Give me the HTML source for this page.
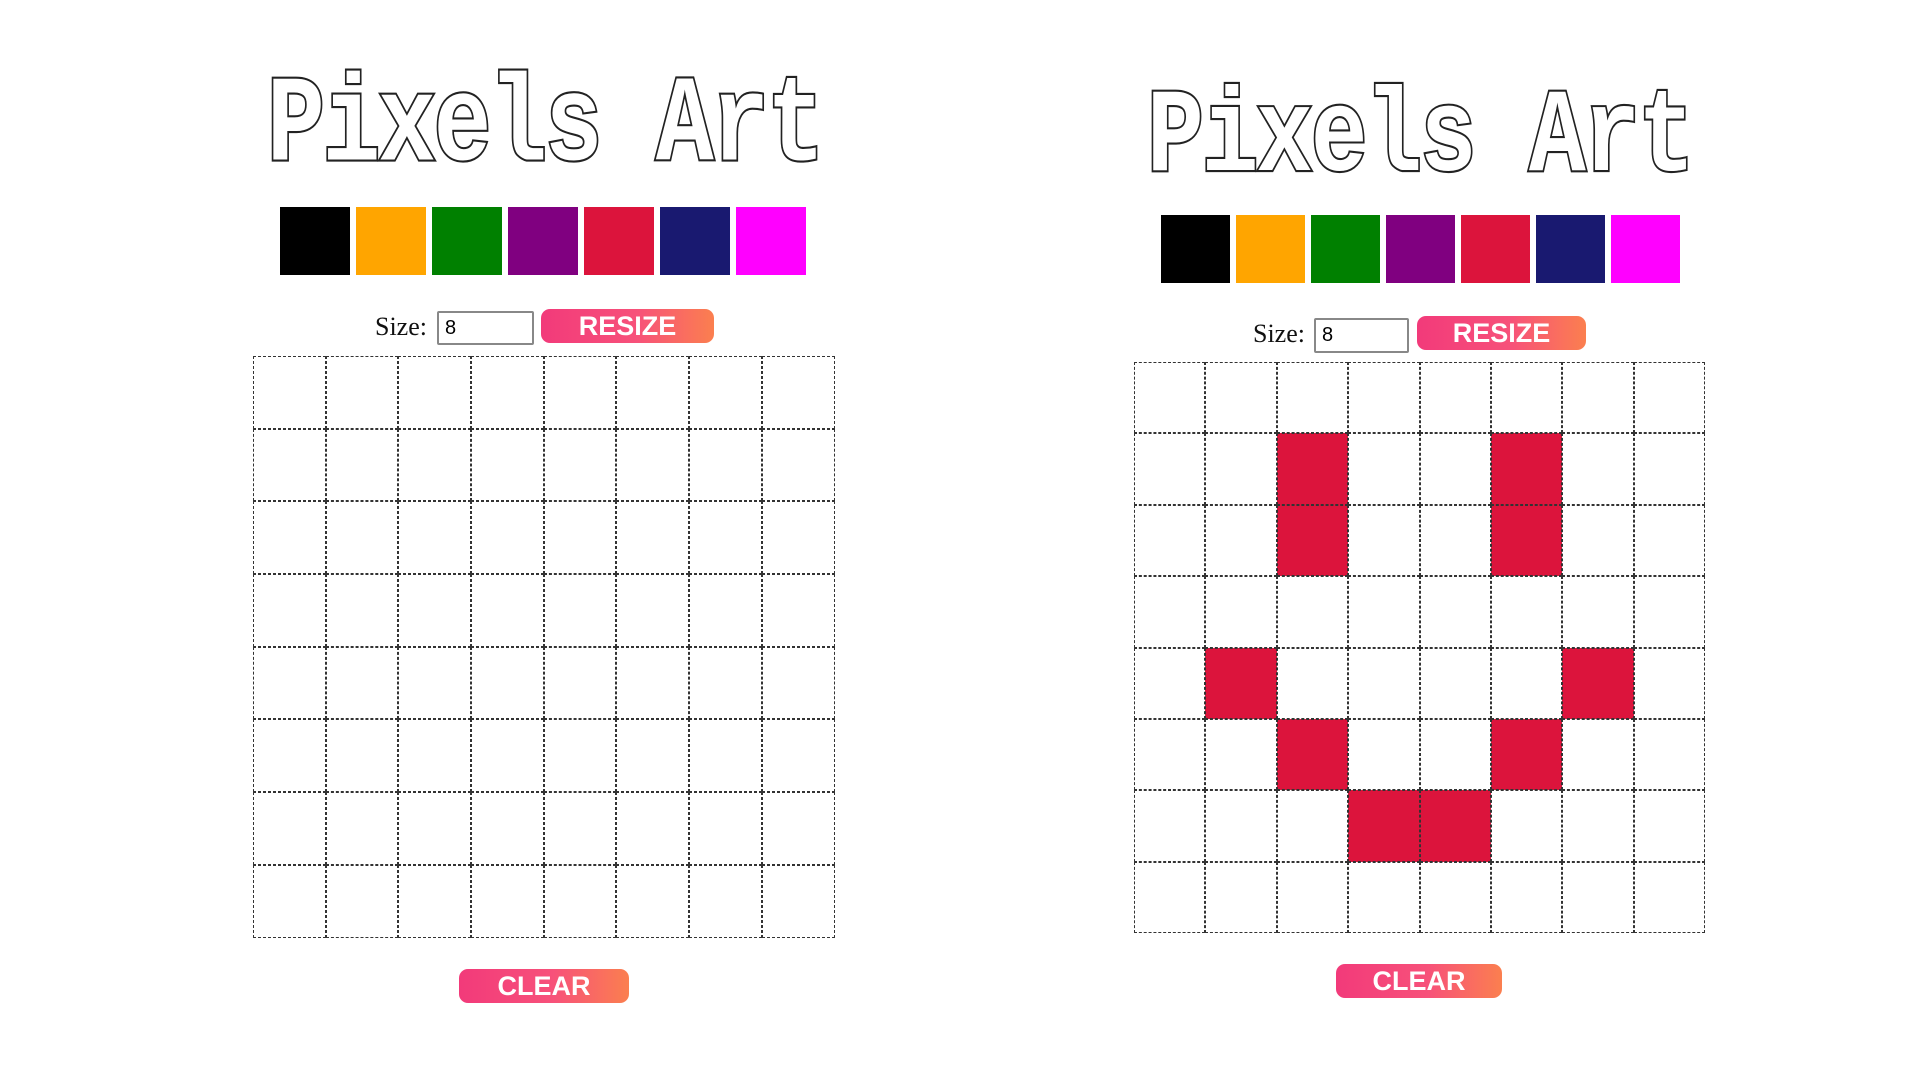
<!DOCTYPE html>
<html><head><meta charset="utf-8"><style>
body{margin:0;width:1920px;height:1080px;background:#fff;position:relative;overflow:hidden;font-family:"Liberation Serif",serif}
.t{position:absolute;font-family:"Liberation Mono",monospace;font-weight:bold;color:#fff;-webkit-text-stroke:3px #222;paint-order:stroke fill;white-space:nowrap;line-height:1;transform-origin:left top;letter-spacing:-2px}
.pal{position:absolute;display:flex;gap:6px}
.pal div{height:68px}
.lbl{position:absolute;font-size:26px;color:#111}
.inp{position:absolute;border:2px solid #888;border-radius:2px;box-sizing:border-box;font-family:"Liberation Sans",sans-serif;font-size:20px;padding:4px 6px;background:#fff}
.btn{position:absolute;border-radius:9px;background:linear-gradient(90deg,#f23a7a,#f7517a 55%,#fb7f4f);color:#fff;font-family:"Liberation Sans",sans-serif;font-weight:bold;font-size:27px;text-align:center;box-sizing:border-box}
.grid{position:absolute;display:grid}
.grid div{border:1.5px dashed #333;box-sizing:border-box}
.grid div.r{background:#dc143c}
</style></head><body>

<div class="t" style="left:267px;top:66px;font-size:86px;transform:scale(1.12,1.42)">Pixels Art</div>
<div class="t" style="left:1147px;top:79px;font-size:86px;transform:scale(1.1,1.38)">Pixels Art</div>

<div class="pal" style="left:280px;top:207px"><div style="width:70px;background:#000"></div><div style="width:70px;background:#ffa500"></div><div style="width:70px;background:#008000"></div><div style="width:70px;background:#800080"></div><div style="width:70px;background:#dc143c"></div><div style="width:70px;background:#191970"></div><div style="width:70px;background:#f0f"></div></div>
<div class="pal" style="left:1161px;top:215px"><div style="width:69px;background:#000"></div><div style="width:69px;background:#ffa500"></div><div style="width:69px;background:#008000"></div><div style="width:69px;background:#800080"></div><div style="width:69px;background:#dc143c"></div><div style="width:69px;background:#191970"></div><div style="width:69px;background:#f0f"></div></div>

<div class="lbl" style="left:375px;top:312px">Size:</div>
<div class="inp" style="left:437px;top:311px;width:97px;height:34px">8</div>
<div class="btn" style="left:541px;top:309px;width:173px;height:34px;line-height:34px">RESIZE</div>

<div class="lbl" style="left:1253px;top:319px">Size:</div>
<div class="inp" style="left:1314px;top:318px;width:95px;height:35px">8</div>
<div class="btn" style="left:1417px;top:316px;width:169px;height:34px;line-height:34px">RESIZE</div>

<div class="grid" id="g1" style="left:253px;top:356px;grid-template-columns:repeat(8,72.7px);grid-template-rows:repeat(8,72.7px)"></div>
<div class="grid" id="g2" style="left:1134px;top:362px;grid-template-columns:repeat(8,71.4px);grid-template-rows:repeat(8,71.4px)"></div>

<div class="btn" style="left:459px;top:969px;width:170px;height:34px;line-height:34px">CLEAR</div>
<div class="btn" style="left:1336px;top:964px;width:166px;height:34px;line-height:34px">CLEAR</div>

<script>
var red={"1,2":1,"1,5":1,"2,2":1,"2,5":1,"4,1":1,"4,6":1,"5,2":1,"5,5":1,"6,3":1,"6,4":1};
["g1","g2"].forEach(function(id){var g=document.getElementById(id),h="";for(var r=0;r<8;r++)for(var c=0;c<8;c++){h+='<div'+(id=="g2"&&red[r+","+c]?' class="r"':'')+'></div>';}g.innerHTML=h;});
</script>
</body></html>
